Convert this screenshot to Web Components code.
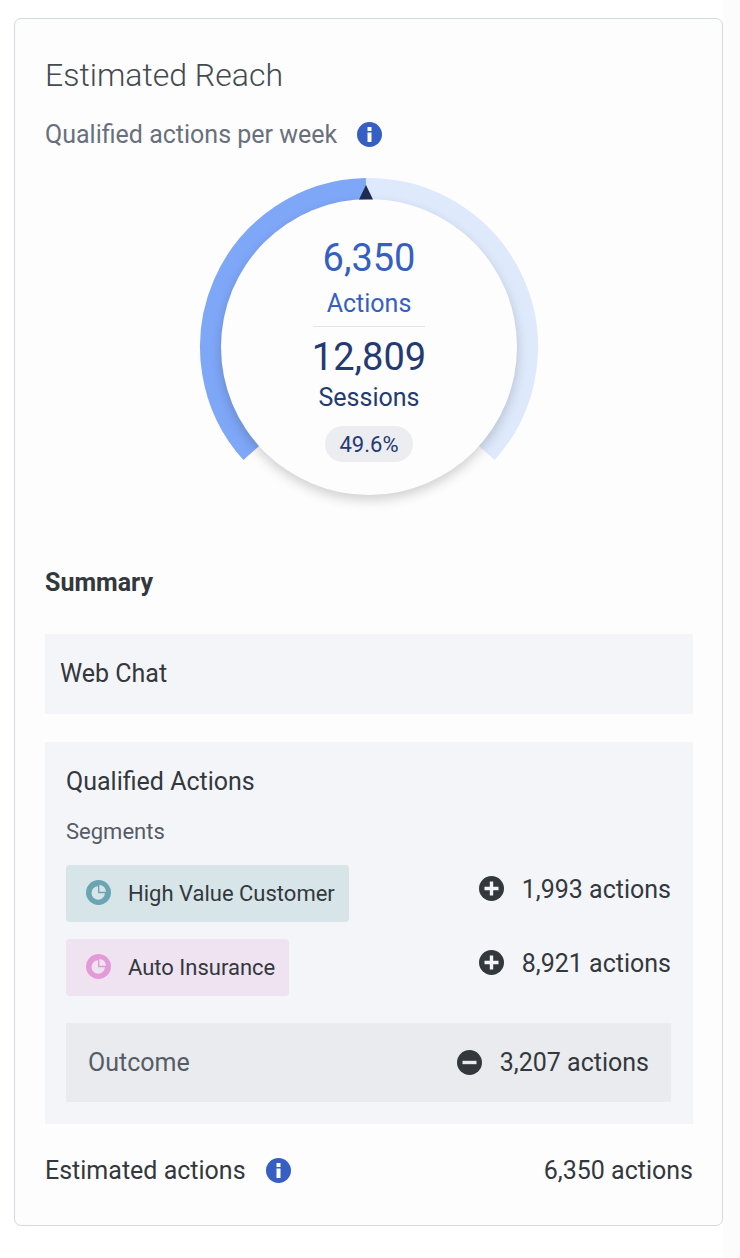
<!DOCTYPE html>
<html lang="en">
<head>
<meta charset="utf-8">
<title>Estimated Reach</title>
<style>
body {
  margin: 0;
  padding: 18px 17px 32px 14px;
  background: linear-gradient(#fcfcfd, #fcfcfd) right / 17px 100% no-repeat #fff;
  font: 400 25px/33px Roboto, sans-serif;
  color: #33383d;
}
</style>
</head>
<body>
<reach-card>
  <reach-gauge slot="gauge" actions="6,350" sessions="12,809" percent="49.6"></reach-gauge>
  <summary-panel slot="summary">Web Chat</summary-panel>
  <qualified-panel slot="summary">
    <segment-row tone="teal" value="1,993 actions">High Value Customer</segment-row>
    <segment-row tone="pink" value="8,921 actions">Auto Insurance</segment-row>
    <outcome-row slot="outcome" value="3,207 actions">Outcome</outcome-row>
  </qualified-panel>
</reach-card>
<script>
function define(name, markup, setup) {
  const template = document.createElement('template');
  template.innerHTML = markup;
  customElements.define(name, class extends HTMLElement {
    connectedCallback() {
      if (this.shadowRoot) return;
      const root = this.attachShadow({ mode: 'open' });
      root.append(template.content.cloneNode(true));
      if (setup) setup(this, root);
    }
  });
}

const glyphs = {
  info: '<path d="M10.5 5h4v4h-4zM10.5 10.5h4v9.5h-4z" fill="#fff"/>',
  plus: '<path d="M5.500 12.500h14M12.500 5.500v14" stroke="#f4f5f9" stroke-width="3.4"/>',
  minus: '<path d="M5.500 12.500h14" stroke="#e9ebee" stroke-width="3.4"/>'
};

define('round-icon', `
<style>
  :host { display: block; flex: none; width: 25px; height: 25px; color: #33383d; }
  svg { display: block; width: 100%; height: 100%; }
</style>
<svg viewBox="0 0 25 25" aria-hidden="true"><circle cx="12.5" cy="12.5" r="12.5" fill="currentColor"/><g></g></svg>`,
(host, root) => { root.querySelector('g').innerHTML = glyphs[host.getAttribute('name')]; });

define('info-button', `
<style>
  :host { display: block; flex: none; }
  button { display: block; padding: 0; border: 0; border-radius: 50%; background: none; cursor: pointer; }
  round-icon { color: #355fc3; }
</style>
<button type="button" aria-label="More information"><round-icon name="info"></round-icon></button>`);

define('reach-card', `
<style>
  :host { display: block; box-sizing: border-box; padding: 36px 29px 38px 30px; border: 1px solid #d3d8e2; border-radius: 7px; background: #fdfdfd; }
  h2 { margin: 0 0 23px; font-size: 32px; font-weight: 300; line-height: 40px; color: #444a50; }
  h3 { margin: 71px 0 35px; font-size: 25px; font-weight: 700; }
  .line { display: flex; align-items: center; gap: 20px; }
  .sub { margin-bottom: 27px; color: #69707d; }
  .panels { display: grid; gap: 28px; }
  .total { margin-top: 30px; }
  .total b { margin-left: auto; font-weight: 400; }
</style>
<h2>Estimated Reach</h2>
<div class="line sub"><span>Qualified actions per week</span><info-button></info-button></div>
<slot name="gauge"></slot>
<h3>Summary</h3>
<div class="panels"><slot name="summary"></slot></div>
<div class="line total"><span>Estimated actions</span><info-button></info-button><b>6,350 actions</b></div>`);

define('reach-gauge', `
<style>
  :host { display: grid; justify-content: center; grid-template: 317px / 338px; color: #243a73; }
  svg, .dial { grid-area: 1 / 1; }
  svg { display: block; width: 338px; height: 338px; overflow: visible; }
  .dial { justify-self: center; align-self: end; box-sizing: border-box; width: 296px; height: 296px; padding-top: 37px; border-radius: 50%; background: #fdfdfd; box-shadow: 0 5px 12px rgba(0,0,0,.18); display: flex; flex-direction: column; align-items: center; }
  .marker { z-index: 1; pointer-events: none; }
  .big { font-size: 38px; line-height: 44px; }
  .actions { color: #355fc3; display: grid; gap: 7px; justify-items: center; }
  hr { width: 112px; height: 1px; margin: 6px 0 8px; border: 0; background: #e4e5e8; }
  .sessions { display: grid; gap: 2px; justify-items: center; }
  .pill { margin-top: 12px; padding: 2px 14px 0; border-radius: 18px; background: #ecedf1; font-size: 22px; line-height: 34px; }
</style>
<svg viewBox="0 0 338 338" aria-hidden="true" fill="none" stroke-width="23">
  <path class="track" stroke="#dee9fc"/><path class="fill" stroke="#7fa7f8"/>
</svg>
<div class="dial">
  <div class="actions"><span class="big" id="a"></span><span>Actions</span></div>
  <hr>
  <div class="sessions"><span class="big" id="s"></span><span>Sessions</span></div>
  <span class="pill" id="p"></span>
</div>
<svg class="marker" viewBox="0 0 338 338" aria-hidden="true"><path d="M166 7l7 14.500h-14z" fill="#1d2b50"/></svg>`,
(host, root) => {
  const percent = Number(host.getAttribute('percent'));
  const sweep = 132;
  const point = deg => {
    const a = deg * Math.PI / 180;
    return (169 + 157.5 * Math.sin(a)).toFixed(2) + ' ' + (169 - 157.5 * Math.cos(a)).toFixed(2);
  };
  const arc = (from, to) => `M${point(from)}A157.5 157.5 0 ${to - from > 180 ? 1 : 0} 1 ${point(to)}`;
  const end = -sweep + 2 * sweep * percent / 100;
  root.querySelector('.track').setAttribute('d', arc(end, sweep));
  root.querySelector('.fill').setAttribute('d', arc(-sweep, end));
  root.getElementById('a').textContent = host.getAttribute('actions');
  root.getElementById('s').textContent = host.getAttribute('sessions');
  root.getElementById('p').textContent = percent + '%';
});

define('summary-panel', `
<style>:host { display: block; padding: 23px 15px 24px; background: #f4f5f9; }</style>
<slot></slot>`);

define('qualified-panel', `
<style>
  :host { display: block; padding: 23px 22px 22px 21px; background: #f4f5f9; }
  h4 { margin: 0 0 20px; font-size: inherit; font-weight: 400; }
  p { margin: 0 0 19px; font-size: 22px; line-height: 28px; color: #565c65; }
  .rows { display: grid; gap: 17px; margin-bottom: 27px; }
</style>
<h4>Qualified Actions</h4>
<p>Segments</p>
<div class="rows"><slot></slot></div>
<slot name="outcome"></slot>`);

define('segment-row', `
<style>
  :host { display: flex; justify-content: space-between; align-items: flex-start; --chip: #d7e5e8; --tone: #6aa5b1; }
  :host([tone="pink"]) { --chip: #efe2f1; --tone: #e39bd8; }
  .chip { display: flex; align-items: center; gap: 17px; padding: 0 14px 0 20px; border-radius: 4px; background: var(--chip); font-size: 22px; line-height: 57px; }
  svg { display: block; width: 25px; height: 25px; margin-bottom: 3px; }
  .value { display: flex; align-items: center; gap: 18px; line-height: 49px; }
  .value round-icon { margin-bottom: 2px; }
</style>
<span class="chip">
  <svg viewBox="0 0 25 25" aria-hidden="true"><circle cx="12.5" cy="12.5" r="12.5" fill="var(--tone)"/><path d="M12 6.300a6.700 6.700 0 1 0 6.900 6.900h-6.900z" fill="var(--chip)"/><path d="M13.400 4.900a6.800 6.800 0 0 1 6.600 6.800h-6.600z" fill="var(--chip)"/></svg>
  <slot></slot>
</span>
<span class="value"><round-icon name="plus"></round-icon><span id="v"></span></span>`,
(host, root) => { root.getElementById('v').textContent = host.getAttribute('value'); });

define('outcome-row', `
<style>
  :host { display: flex; justify-content: space-between; align-items: center; padding: 0 22px; background: #e9ebee; line-height: 79px; color: #565c65; }
  .value { display: flex; align-items: center; gap: 18px; color: #33383d; }
</style>
<slot></slot>
<span class="value"><round-icon name="minus"></round-icon><span id="v"></span></span>`,
(host, root) => { root.getElementById('v').textContent = host.getAttribute('value'); });
</script>
</body>
</html>
